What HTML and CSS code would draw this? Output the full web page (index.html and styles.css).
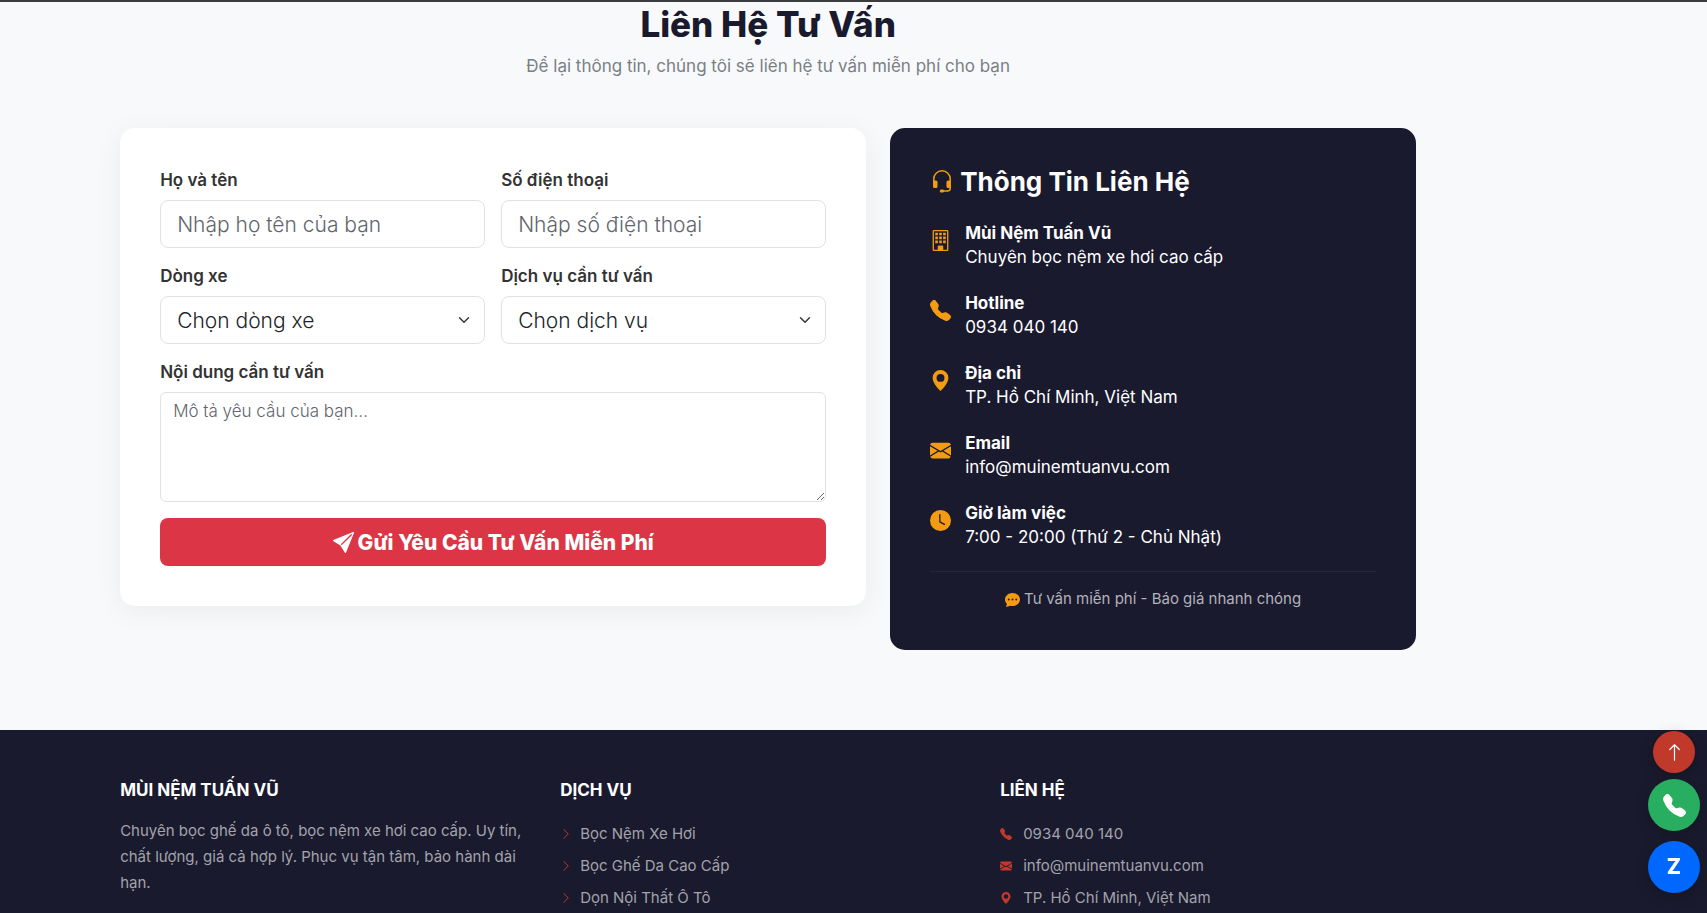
FILE: index.html
```html
<!DOCTYPE html>
<html lang="vi">
<head>
  <meta charset="UTF-8">
  <meta name="viewport" content="width=device-width, initial-scale=1.0">
  <title>Mùi Nệm Tuấn Vũ - Liên Hệ Tư Vấn</title>
  <link rel="stylesheet" href="styles.css">
</head>
<body>
  <svg class="sprite" aria-hidden="true">
    <symbol id="headset" viewBox="0 0 16 16"><path d="M8 1a5 5 0 0 0-5 5v1h1a1 1 0 0 1 1 1v3a1 1 0 0 1-1 1H3a1 1 0 0 1-1-1V6a6 6 0 1 1 12 0v6a2.5 2.5 0 0 1-2.5 2.5H9.366a1 1 0 0 1-.866.5h-1a1 1 0 1 1 0-2h1a1 1 0 0 1 .866.5H11.5A1.5 1.5 0 0 0 13 12h-1a1 1 0 0 1-1-1V8a1 1 0 0 1 1-1h1V6a5 5 0 0 0-5-5"/></symbol>
    <symbol id="building" viewBox="0 0 16 16"><path fill-rule="evenodd" d="M3 0h10a1 1 0 0 1 1 1v14a1 1 0 0 1-1 1H3a1 1 0 0 1-1-1V1a1 1 0 0 1 1-1zm0 1v14h3v-2.5a.5.5 0 0 1 .5-.5h3a.5.5 0 0 1 .5.5V15h3V1z"/><path d="M4 2h2v2H4zM7 2h2v2H7zM10 2h2v2h-2zM4 5h2v2H4zM7 5h2v2H7zM10 5h2v2h-2zM4 8h2v2H4zM7 8h2v2H7zM10 8h2v2h-2zM6 12h4v4H6z"/></symbol>
    <symbol id="phone" viewBox="0 0 16 16"><path d="M1.885.511a1.745 1.745 0 0 1 2.61.163L6.29 2.98c.329.423.445.974.315 1.494l-.547 2.19a.68.68 0 0 0 .178.643l2.457 2.457a.68.68 0 0 0 .644.178l2.189-.547a1.75 1.75 0 0 1 1.494.315l2.306 1.794c.829.645.905 1.87.163 2.611l-1.034 1.034c-.74.74-1.846 1.065-2.877.702a18.6 18.6 0 0 1-7.01-4.42 18.6 18.6 0 0 1-4.42-7.009c-.362-1.03-.037-2.137.703-2.877z"/></symbol>
    <symbol id="geo" viewBox="0 0 16 16"><path d="M8 16s6-5.686 6-10A6 6 0 0 0 2 6c0 4.314 6 10 6 10m0-7a3 3 0 1 1 0-6 3 3 0 0 1 0 6"/></symbol>
    <symbol id="envelope" viewBox="0 0 16 16"><path d="M.05 3.555A2 2 0 0 1 2 2h12a2 2 0 0 1 1.95 1.555L8 8.414zM0 4.697v7.104l5.803-3.558zM6.761 8.83l-6.57 4.027A2 2 0 0 0 2 14h12a2 2 0 0 0 1.808-1.144l-6.57-4.027L8 9.586zm3.436-.586L16 11.801V4.697z"/></symbol>
    <symbol id="clock" viewBox="0 0 16 16"><path d="M16 8A8 8 0 1 1 0 8a8 8 0 0 1 16 0M8 3.5a.5.5 0 0 0-1 0V9a.5.5 0 0 0 .252.434l3.5 2a.5.5 0 0 0 .496-.868L8 8.71z"/></symbol>
    <symbol id="chat" viewBox="0 0 16 16"><path d="M16 8c0 3.866-3.582 7-8 7a9 9 0 0 1-2.347-.306c-.584.296-1.925.864-4.181 1.234-.2.032-.352-.176-.273-.362.354-.836.674-1.95.77-2.966C.744 11.37 0 9.76 0 8c0-3.866 3.582-7 8-7s8 3.134 8 7M5 8a1 1 0 1 0-2 0 1 1 0 0 0 2 0m4 0a1 1 0 1 0-2 0 1 1 0 0 0 2 0m3 1a1 1 0 1 0 0-2 1 1 0 0 0 0 2"/></symbol>
    <symbol id="send" viewBox="0 0 16 16"><path d="M15.964.686a.5.5 0 0 0-.65-.65L.767 5.855H.766l-.452.18a.5.5 0 0 0-.082.887l.41.26.001.002 4.995 3.178 3.178 4.995.002.002.26.41a.5.5 0 0 0 .886-.083zm-1.833 1.89L6.637 10.07l-.215-.338a.5.5 0 0 0-.154-.154l-.338-.215 7.494-7.494 1.178-.471z"/></symbol>
    <symbol id="chevron" viewBox="0 0 16 16"><path d="M4.646 1.646a.5.5 0 0 1 .708 0l6 6a.5.5 0 0 1 0 .708l-6 6a.5.5 0 0 1-.708-.708L10.293 8 4.646 2.354a.5.5 0 0 1 0-.708"/></symbol>
    <symbol id="arrow-up" viewBox="0 0 16 16"><path d="M8 15a.5.5 0 0 0 .5-.5V2.707l3.146 3.147a.5.5 0 0 0 .708-.708l-4-4a.5.5 0 0 0-.708 0l-4 4a.5.5 0 1 0 .708.708L7.5 2.707V14.5a.5.5 0 0 0 .5.5"/></symbol>
  </svg>

  <section class="contact">
    <div class="wrap">
      <div class="container">
        <div class="section-title">
          <h2>Liên Hệ Tư Vấn</h2>
          <p>Để lại thông tin, chúng tôi sẽ liên hệ tư vấn miễn phí cho bạn</p>
        </div>

        <div class="contact-row">
          <form class="contact-form">
            <div class="field">
              <label for="name">Họ và tên</label>
              <input type="text" id="name" placeholder="Nhập họ tên của bạn">
            </div>
            <div class="field">
              <label for="tel">Số điện thoại</label>
              <input type="tel" id="tel" placeholder="Nhập số điện thoại">
            </div>
            <div class="field">
              <label for="car">Dòng xe</label>
              <select id="car">
                <option>Chọn dòng xe</option>
              </select>
            </div>
            <div class="field">
              <label for="service">Dịch vụ cần tư vấn</label>
              <select id="service">
                <option>Chọn dịch vụ</option>
                <option>Bọc Nệm Xe Hơi</option>
                <option>Bọc Ghế Da Cao Cấp</option>
                <option>Dọn Nội Thất Ô Tô</option>
              </select>
            </div>
            <div class="field full">
              <label for="message">Nội dung cần tư vấn</label>
              <textarea id="message" placeholder="Mô tả yêu cầu của bạn..."></textarea>
            </div>
            <button type="submit" class="btn-send full">
              <svg class="icon"><use href="#send"/></svg>Gửi Yêu Cầu Tư Vấn Miễn Phí
            </button>
          </form>

          <div class="contact-info">
            <h4><svg class="icon"><use href="#headset"/></svg>Thông Tin Liên Hệ</h4>
            <div class="info-item">
              <svg class="icon"><use href="#building"/></svg>
              <div><strong>Mùi Nệm Tuấn Vũ</strong><p>Chuyên bọc nệm xe hơi cao cấp</p></div>
            </div>
            <div class="info-item">
              <svg class="icon"><use href="#phone"/></svg>
              <div><strong>Hotline</strong><p>0934 040 140</p></div>
            </div>
            <div class="info-item">
              <svg class="icon"><use href="#geo"/></svg>
              <div><strong>Địa chỉ</strong><p>TP. Hồ Chí Minh, Việt Nam</p></div>
            </div>
            <div class="info-item">
              <svg class="icon"><use href="#envelope"/></svg>
              <div><strong>Email</strong><p>info@muinemtuanvu.com</p></div>
            </div>
            <div class="info-item">
              <svg class="icon"><use href="#clock"/></svg>
              <div><strong>Giờ làm việc</strong><p>7:00 - 20:00 (Thứ 2 - Chủ Nhật)</p></div>
            </div>
            <p class="info-note"><svg class="icon"><use href="#chat"/></svg>Tư vấn miễn phí - Báo giá nhanh chóng</p>
          </div>
        </div>
      </div>
    </div>
  </section>

  <footer>
    <div class="wrap">
      <div class="container footer-row">
        <div>
          <h5>MÙI NỆM TUẤN VŨ</h5>
          <p>Chuyên bọc ghế da ô tô, bọc nệm xe hơi cao cấp. Uy tín, chất lượng, giá cả hợp lý. Phục vụ tận tâm, bảo hành dài hạn.</p>
        </div>
        <div>
          <h5>DỊCH VỤ</h5>
          <ul>
            <li><a href="#"><svg class="icon"><use href="#chevron"/></svg>Bọc Nệm Xe Hơi</a></li>
            <li><a href="#"><svg class="icon"><use href="#chevron"/></svg>Bọc Ghế Da Cao Cấp</a></li>
            <li><a href="#"><svg class="icon"><use href="#chevron"/></svg>Dọn Nội Thất Ô Tô</a></li>
          </ul>
        </div>
        <div>
          <h5>LIÊN HỆ</h5>
          <ul class="footer-contact">
            <li><svg class="icon"><use href="#phone"/></svg>0934 040 140</li>
            <li><svg class="icon"><use href="#envelope"/></svg>info@muinemtuanvu.com</li>
            <li><svg class="icon"><use href="#geo"/></svg>TP. Hồ Chí Minh, Việt Nam</li>
          </ul>
        </div>
      </div>
    </div>
  </footer>

  <div class="floating">
    <button class="to-top" aria-label="Lên đầu trang"><svg class="icon"><use href="#arrow-up"/></svg></button>
    <a class="call" href="tel:0934040140" aria-label="Gọi"><svg class="icon"><use href="#phone"/></svg></a>
    <a class="zalo" href="#">Z</a>
  </div>
</body>
</html>
```
FILE: styles.css
```css
* {
  box-sizing: border-box;
}
body {
  margin: 0;
  min-height: 100vh;
  display: flex;
  flex-direction: column;
  font-family: Inter, "Noto Sans", sans-serif;
  font-size: 17px;
  line-height: 24px;
  color: #333;
  background: #f8f9fb;
  border-top: 2px solid #3c3c3c;
}
h2, h4, h5, p, ul {
  margin: 0;
  padding: 0;
}
.sprite {
  position: absolute;
  width: 0;
  height: 0;
}
.icon {
  width: 16px;
  height: 16px;
  fill: currentColor;
  flex-shrink: 0;
}

/* content keeps clear of the floating buttons */
.wrap {
  width: 90%;
}
.container {
  max-width: 1320px;
  margin: 0 auto;
  padding: 0 12px;
}

.contact {
  padding-bottom: 80px;
}
.section-title {
  text-align: center;
  margin-bottom: 48px;
}
.section-title h2 {
  font-size: 35px;
  line-height: 44px;
  font-weight: 800;
  color: #1a1a2e;
  margin-bottom: 6px;
}
.section-title p {
  line-height: 28px;
  color: #7a7f85;
}
.contact-row {
  display: grid;
  grid-template-columns: 746fr 526fr;
  gap: 24px;
  align-items: start;
}

.contact-form {
  display: grid;
  grid-template-columns: 1fr 1fr;
  gap: 16px;
  padding: 40px;
  background: #fff;
  border-radius: 15px;
  box-shadow: 0 5px 30px rgba(0, 0, 0, 0.06);
}
.field {
  min-width: 0;
}
.full {
  grid-column: 1 / -1;
}
.field label {
  display: block;
  margin-bottom: 8px;
  font-weight: 600;
}
.field input,
.field select,
.field textarea {
  display: block;
  width: 100%;
  font-family: inherit;
  color: #212529;
  background-color: #fff;
  border: 1px solid #dee2e6;
  border-radius: 8px;
}
.field input,
.field select {
  height: 48px;
  padding: 0 16px;
  font-size: 21px;
  font-weight: 300;
}
.field select {
  appearance: none;
  background-image: url("data:image/svg+xml,%3Csvg xmlns='http://www.w3.org/2000/svg' viewBox='0 0 16 16'%3E%3Cpath fill='none' stroke='%23343a40' stroke-linecap='round' stroke-linejoin='round' stroke-width='2' d='m2 5 6 6 6-6'/%3E%3C/svg%3E");
  background-repeat: no-repeat;
  background-position: right 14px center;
  background-size: 12px;
}
.field textarea {
  height: 110px;
  padding: 6px 12px;
  font-size: 17px;
  font-weight: 300;
  line-height: 24px;
  border-radius: 6px;
  resize: vertical;
}
.field ::placeholder {
  color: #5f666d;
}
.btn-send {
  display: flex;
  justify-content: center;
  align-items: center;
  gap: 4px;
  height: 48px;
  font-family: inherit;
  font-size: 21px;
  font-weight: 800;
  color: #fff;
  background: #dc3545;
  border: none;
  border-radius: 8px;
  cursor: pointer;
}
.btn-send .icon {
  width: 21px;
  height: 21px;
}

.contact-info {
  padding: 40px;
  color: #fff;
  background: #1a1a2e;
  border-radius: 15px;
}
.contact-info .icon {
  color: #f39c12;
}
.contact-info h4 {
  display: flex;
  align-items: center;
  gap: 6px;
  font-size: 26px;
  line-height: 28px;
  font-weight: 700;
  margin-bottom: 25px;
}
.contact-info h4 .icon {
  width: 24px;
  height: 24px;
}
.info-item {
  display: flex;
  gap: 14px;
  margin-bottom: 22px;
}
.info-item .icon {
  width: 21px;
  height: 21px;
  margin-top: 9px;
}
.info-item strong {
  display: block;
  font-weight: 700;
}
.info-note {
  display: flex;
  justify-content: center;
  align-items: center;
  gap: 4px;
  padding-top: 16px;
  border-top: 1px solid #25263a;
  font-size: 15px;
  line-height: 22px;
  color: #b2b2ba;
}
.info-note .icon {
  width: 15px;
  height: 15px;
}

footer {
  flex: 1;
  padding-top: 48px;
  color: #a3a3ab;
  background: #1a1a2e;
}
.footer-row {
  display: grid;
  grid-template-columns: repeat(3, 1fr);
  gap: 24px;
  font-size: 15px;
}
footer h5 {
  font-size: 17px;
  line-height: 24px;
  font-weight: 700;
  color: #fff;
  margin-bottom: 16px;
}
footer p {
  line-height: 26px;
}
footer ul {
  list-style: none;
}
footer li {
  line-height: 32px;
}
footer li,
footer a {
  display: flex;
  align-items: center;
  gap: 8px;
}
footer a {
  color: inherit;
  text-decoration: none;
}
footer li .icon {
  width: 12px;
  height: 12px;
  color: #c0392b;
}
.footer-contact li {
  gap: 11px;
}

.floating {
  position: fixed;
  right: 7px;
  bottom: 20px;
  display: flex;
  flex-direction: column;
  align-items: center;
  gap: 10px;
}
.floating a,
.floating button {
  display: flex;
  justify-content: center;
  align-items: center;
  width: 52px;
  height: 52px;
  padding: 0;
  color: #fff;
  border: none;
  border-radius: 50%;
  text-decoration: none;
  cursor: pointer;
  box-shadow: 0 4px 15px rgba(0, 0, 0, 0.2);
}
.floating .to-top {
  width: 42px;
  height: 42px;
  margin-bottom: -4px;
  background: #c0392b;
}
.floating .to-top .icon {
  width: 19px;
  height: 19px;
}
.floating .call {
  background: #27ae60;
}
.floating .call .icon {
  width: 23px;
  height: 23px;
}
.floating .zalo {
  background: #0068ff;
  font-size: 21px;
  font-weight: 800;
}
```
